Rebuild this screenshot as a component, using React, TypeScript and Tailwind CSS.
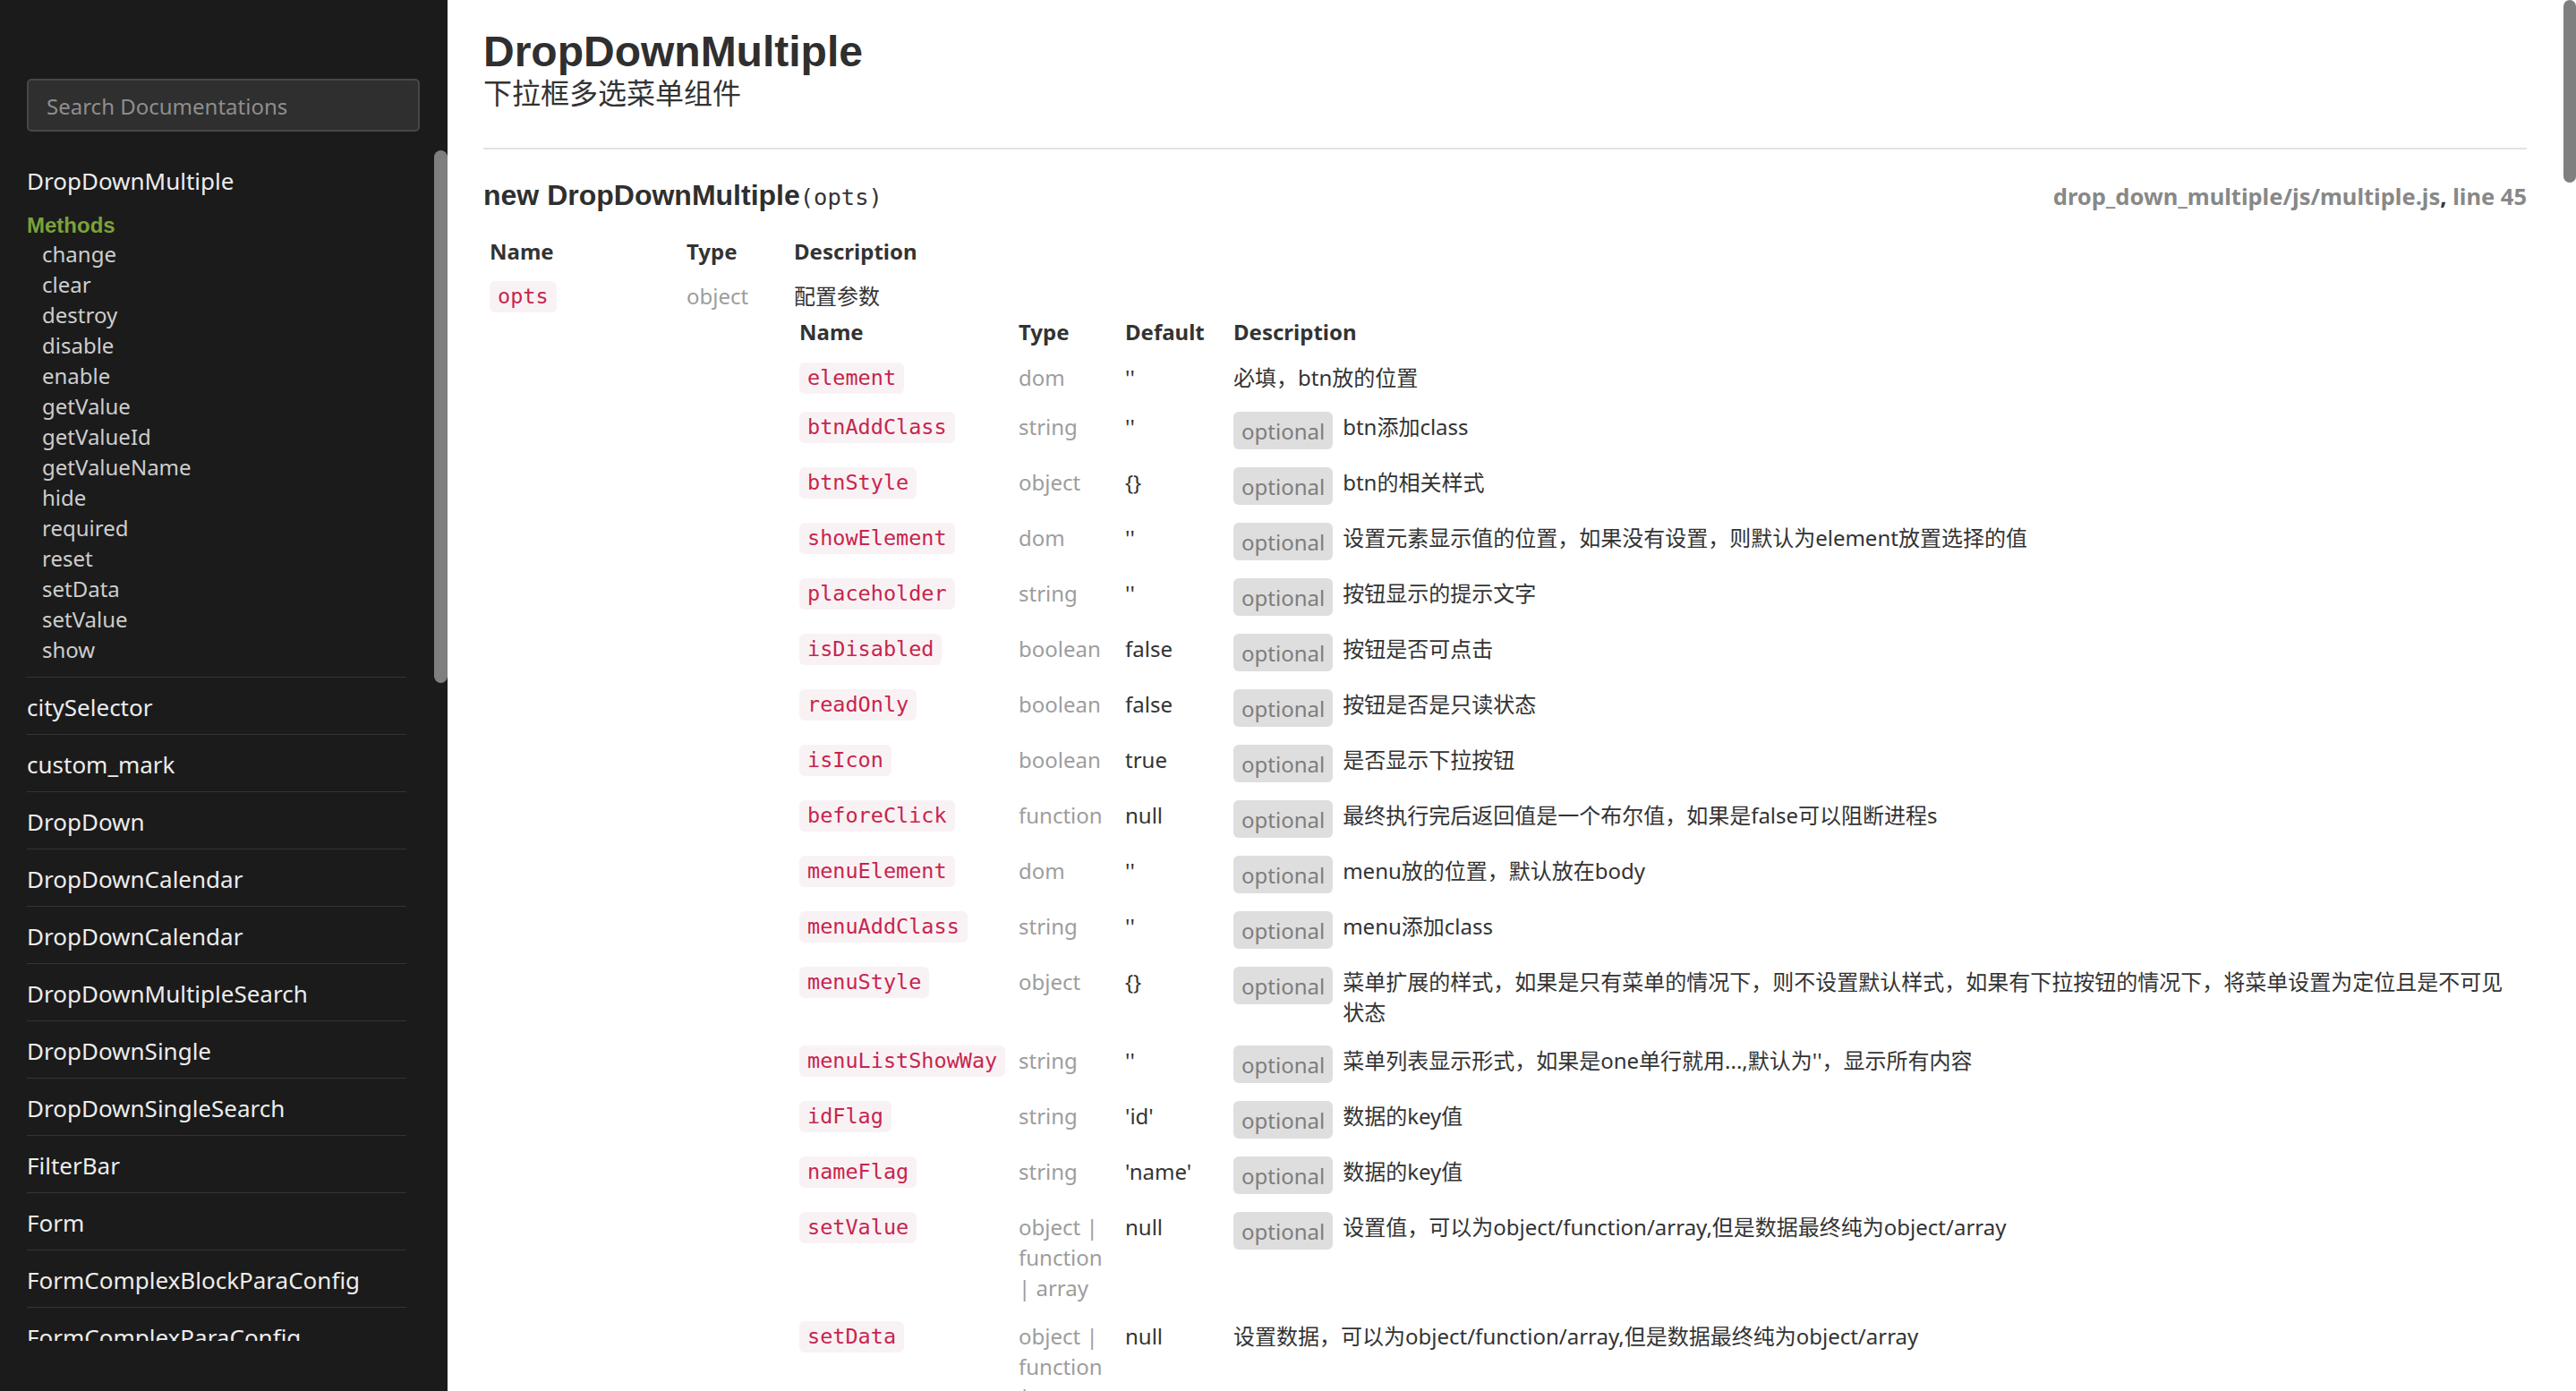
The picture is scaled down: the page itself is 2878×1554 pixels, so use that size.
import React from "react";

type Prop = {
  name: string;
  type: string[];
  def: string;
  opt: boolean;
  desc: string;
};

const PROPS: Prop[] = [
  { name: "element", type: ["dom"], def: "''", opt: false, desc: "必填，btn放的位置" },
  { name: "btnAddClass", type: ["string"], def: "''", opt: true, desc: "btn添加class" },
  { name: "btnStyle", type: ["object"], def: "{}", opt: true, desc: "btn的相关样式" },
  { name: "showElement", type: ["dom"], def: "''", opt: true, desc: "设置元素显示值的位置，如果没有设置，则默认为element放置选择的值" },
  { name: "placeholder", type: ["string"], def: "''", opt: true, desc: "按钮显示的提示文字" },
  { name: "isDisabled", type: ["boolean"], def: "false", opt: true, desc: "按钮是否可点击" },
  { name: "readOnly", type: ["boolean"], def: "false", opt: true, desc: "按钮是否是只读状态" },
  { name: "isIcon", type: ["boolean"], def: "true", opt: true, desc: "是否显示下拉按钮" },
  { name: "beforeClick", type: ["function"], def: "null", opt: true, desc: "最终执行完后返回值是一个布尔值，如果是false可以阻断进程s" },
  { name: "menuElement", type: ["dom"], def: "''", opt: true, desc: "menu放的位置，默认放在body" },
  { name: "menuAddClass", type: ["string"], def: "''", opt: true, desc: "menu添加class" },
  { name: "menuStyle", type: ["object"], def: "{}", opt: true, desc: "菜单扩展的样式，如果是只有菜单的情况下，则不设置默认样式，如果有下拉按钮的情况下，将菜单设置为定位且是不可见状态" },
  { name: "menuListShowWay", type: ["string"], def: "''", opt: true, desc: "菜单列表显示形式，如果是one单行就用...,默认为''，显示所有内容" },
  { name: "idFlag", type: ["string"], def: "'id'", opt: true, desc: "数据的key值" },
  { name: "nameFlag", type: ["string"], def: "'name'", opt: true, desc: "数据的key值" },
  { name: "setValue", type: ["object", "function", "array"], def: "null", opt: true, desc: "设置值，可以为object/function/array,但是数据最终纯为object/array" },
  { name: "setData", type: ["object", "function", "array"], def: "null", opt: false, desc: "设置数据，可以为object/function/array,但是数据最终纯为object/array" },
];

const METHODS = [
  "change",
  "clear",
  "destroy",
  "disable",
  "enable",
  "getValue",
  "getValueId",
  "getValueName",
  "hide",
  "required",
  "reset",
  "setData",
  "setValue",
  "show",
];

const NAV = [
  "citySelector",
  "custom_mark",
  "DropDown",
  "DropDownCalendar",
  "DropDownCalendar",
  "DropDownMultipleSearch",
  "DropDownSingle",
  "DropDownSingleSearch",
  "FilterBar",
  "Form",
  "FormComplexBlockParaConfig",
  "FormComplexParaConfig",
];

function Code({ children }: { children: React.ReactNode }) {
  return (
    <span className="inline-block h-[35px] whitespace-nowrap rounded-[6px] bg-[#f9f2f4] px-[9px] font-['DejaVu_Sans_Mono',monospace] text-[23.5px] leading-[35px] text-[#c7254e]">
      {children}
    </span>
  );
}

function Optional() {
  return (
    <span className="inline-block h-[42px] shrink-0 rounded-[6px] bg-[#dedede] px-[9px] pt-[5px] text-[24px] leading-[34px] text-[#7d7d7d]">
      optional
    </span>
  );
}

function Sidebar() {
  return (
    <aside className="relative h-full w-[500px] shrink-0 bg-[#1b1b1b] font-['Noto_Sans','Noto_Sans_CJK_SC',sans-serif]">
      <div className="pl-[30px] pt-[88px]">
        <input
          readOnly
          placeholder="Search Documentations"
          className="block h-[59px] w-[439px] rounded-[5px] border-2 border-[#474747] bg-[#2f2f2f] px-[20px] pt-[2px] text-[24px] text-[#ddd] outline-none placeholder:text-[#8e8e8e]"
        />
      </div>
      <div className="mt-[21px] h-[1330px] overflow-hidden">
        <div className="ml-[30px] w-[424px]">
          <div className="border-b border-[#343434] pb-[13px] pt-[17px]">
            <div className="text-[26px] leading-[34px] text-[#ececec]">DropDownMultiple</div>
            <div className="mt-[16px] font-['Liberation_Sans',sans-serif] text-[24px] font-bold leading-[34px] text-[#7ba23a]">
              Methods
            </div>
            <ul className="-mt-[2px]">
              {METHODS.map((m) => (
                <li key={m} className="pl-[17px] text-[24px] leading-[34px] text-[#cdcdcd]">
                  {m}
                </li>
              ))}
            </ul>
          </div>
          {NAV.map((n, i) => (
            <div
              key={n + i}
              className="border-b border-[#343434] pb-[13px] pt-[16px] text-[26px] leading-[34px] text-[#ececec]"
            >
              {n}
            </div>
          ))}
        </div>
      </div>
      <div className="absolute left-[485px] top-[168px] h-[595px] w-[15px] rounded-full bg-[#7f7f7f]" />
    </aside>
  );
}

function PropRow({ p }: { p: Prop }) {
  return (
    <div className="grid grid-cols-[245px_119px_121px_1fr] items-start py-[10px]">
      <div>
        <Code>{p.name}</Code>
      </div>
      <div className="pr-[14px] text-[24px] leading-[34px] text-[#9d9d9d]">{p.type.join(" | ")}</div>
      <div className="text-[24px] leading-[34px] text-[#333]">{p.def}</div>
      <div className="flex items-start">
        {p.opt && <Optional />}
        <span className={`text-[24px] leading-[34px] text-[#333] ${p.opt ? "ml-[11px]" : ""}`}>{p.desc}</span>
      </div>
    </div>
  );
}

function Main() {
  return (
    <main className="relative h-full min-w-0 flex-1 overflow-hidden bg-white pl-[40px] pr-[55px] pt-[34px] font-['Noto_Sans','Noto_Sans_CJK_SC',sans-serif] text-[#333]">
      <h1 className="font-['Liberation_Sans','Noto_Sans_CJK_SC',sans-serif] text-[48px] font-bold leading-[48px] text-[#2f2f2f]">
        DropDownMultiple
      </h1>
      <div className="mt-[2px] text-[32px] leading-[40px] text-[#333]">下拉框多选菜单组件</div>
      <div className="mt-[41px] h-[2px] bg-[#e3e3e3]" />

      <div className="mt-[31px] flex items-baseline justify-between leading-[40px]">
        <h4 className="font-['Liberation_Sans',sans-serif] text-[32px] font-bold text-[#2f2f2f]">
          new DropDownMultiple
          <span className="font-['DejaVu_Sans_Mono',monospace] text-[25.5px] font-normal text-[#333]">(opts)</span>
        </h4>
        <div className="text-[25.5px] font-bold text-[#333]">
          <span className="text-[#888]">drop_down_multiple/js/multiple.js</span>,{" "}
          <span className="text-[#888]">line 45</span>
        </div>
      </div>

      <div className="mt-[24px] pl-[7px]">
        <div className="grid grid-cols-[220px_120px_1fr] text-[24px] font-bold leading-[34px] text-[#333]">
          <div>Name</div>
          <div>Type</div>
          <div>Description</div>
        </div>
        <div className="mt-[16px] grid grid-cols-[220px_120px_1fr] items-start">
          <div>
            <Code>opts</Code>
          </div>
          <div className="text-[24px] leading-[34px] text-[#9d9d9d]">object</div>
          <div>
            <div className="text-[24px] leading-[34px] text-[#333]">配置参数</div>
            <div className="ml-[6px] mt-[6px] pr-[20px]">
              <div className="grid grid-cols-[245px_119px_121px_1fr] pb-[7px] text-[24px] font-bold leading-[34px] text-[#333]">
                <div>Name</div>
                <div>Type</div>
                <div>Default</div>
                <div>Description</div>
              </div>
              {PROPS.map((p) => (
                <PropRow key={p.name} p={p} />
              ))}
            </div>
          </div>
        </div>
      </div>

      <div className="absolute right-0 top-0 h-[204px] w-[14px] rounded-full bg-[#7f7f7f]" />
    </main>
  );
}

export default function App() {
  return (
    <div className="flex h-[1554px] w-full overflow-hidden">
      <Sidebar />
      <Main />
    </div>
  );
}
